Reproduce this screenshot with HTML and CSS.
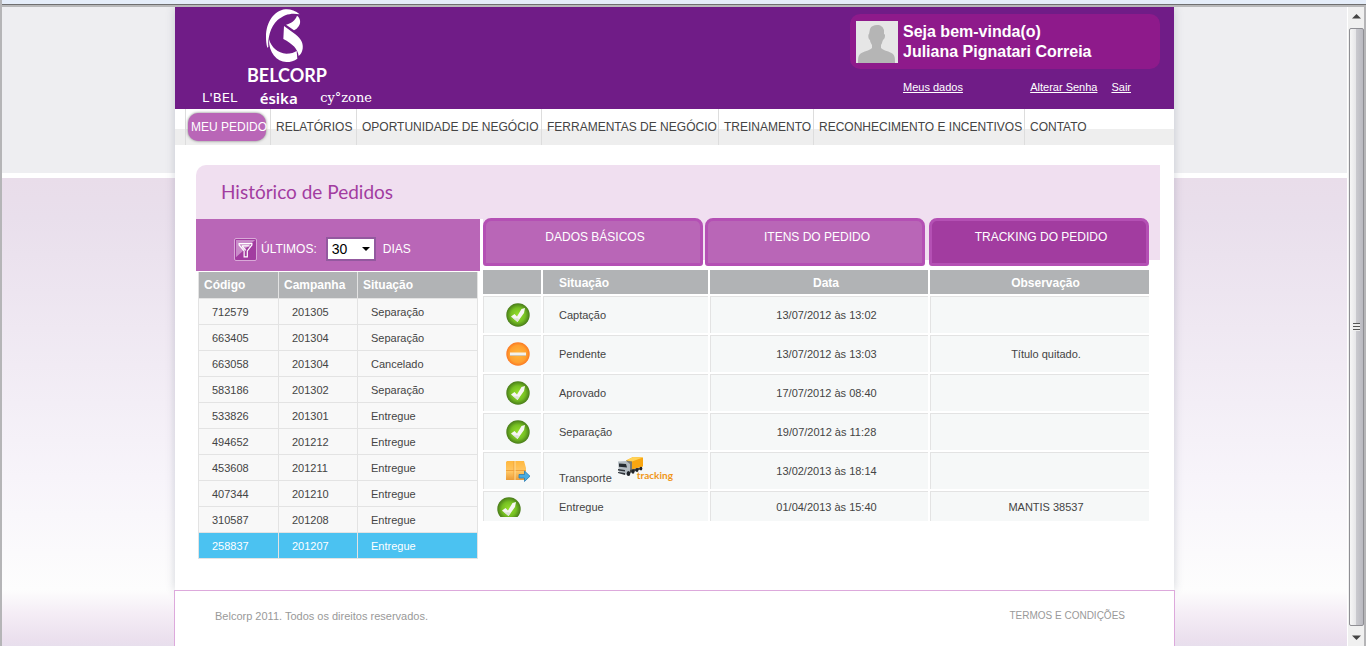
FILE: index.html
```
<!DOCTYPE html>
<html lang="pt-BR">
<head>
<meta charset="utf-8">
<title>Belcorp - Histórico de Pedidos</title>
<link rel="stylesheet" href="styles.css">
</head>
<body>
<svg class="defs" aria-hidden="true">
  <defs>
    <radialGradient id="green" cx="50%" cy="50%" r="55%">
      <stop offset="0" stop-color="#97e02c"/><stop offset=".55" stop-color="#76c022"/><stop offset="1" stop-color="#3d6a17"/>
    </radialGradient>
    <radialGradient id="orange" cx="50%" cy="50%" r="52%">
      <stop offset="0" stop-color="#ffb83c"/><stop offset=".7" stop-color="#ffa030"/><stop offset="1" stop-color="#fb7420"/>
    </radialGradient>
    <linearGradient id="box" x1="0" y1="0" x2="0" y2="1">
      <stop offset="0" stop-color="#ffb83f"/><stop offset=".55" stop-color="#ffc765"/><stop offset="1" stop-color="#eb9c38"/>
    </linearGradient>
    <symbol id="check" viewBox="0 0 24 24">
      <circle cx="12" cy="12" r="11.7" fill="url(#green)"/>
      <path d="M5 13.500l3.500-2.500 2.500 2.500 4.500-7.500 3.500-1-1 5-6.500 9z" fill="#f6f6f2"/>
      <path d="M5 13.500l6.500 5.500 2-3-2.500-1-2 .5z" fill="#dfe3da"/>
    </symbol>
  </defs>
</svg>
<div class="window">
  <div class="site">
    <div class="sheet">
      <header class="header">
        <div class="brand">
          <svg class="brand-mark" viewBox="0 0 114 162" aria-hidden="true">
            <g fill="#fff">
              <path d="M101 16C88 4 72 0 58 1 24 5 0 40 0 84c0 12 1 22 4 32l3-2C5 88 13 54 34 34 55 15 78 11 101 16z"/>
              <path d="M93 20c11 8 12 22 5 32-4 6-8 10-14 12L60 47c14-4 28-12 33-27z"/>
              <path d="M54 51l34 25c18 14 24 28 22 43-2 11-6 17-12 22-3-22-18-36-46-51z"/>
              <path d="M9 91c7 24 26 42 52 43 14 0 24-3 31-8l2 23c-9 7-20 10-33 10C32 158 8 132 9 91z"/>
            </g>
          </svg>
          <strong class="brand-name">BELCORP</strong>
          <div class="brand-lines">
            <span class="lbel">L'BEL</span>
            <span class="esika">ésika</span>
            <span class="cyzone">cy°zone</span>
          </div>
        </div>
        <div class="account">
          <div class="welcome">
            <svg class="avatar" viewBox="0 0 42 42" aria-hidden="true">
              <path fill="#e6e6e6" d="M0 0h42v42H0z"/>
              <path fill="#b5b5b5" d="M14 8c1-3 4-4 7-4 4 0 6 2 7 5v4c1 0 1 1 1 2 0 2-1 3-2 4-1 2-1 4-2 5v3c3 3 8 3 12 6 2 2 2 5 2 9H2c0-4 0-7 2-9 4-3 9-3 12-6v-3c-1-2-2-3-2-5-2-1-2-6-1-6z"/>
            </svg>
            <strong>Seja bem-vinda(o)<br>Juliana Pignatari Correia</strong>
          </div>
          <div class="account-links">
            <a class="my-data" href="#">Meus dados</a>
            <a href="#">Alterar Senha</a>
            <a href="#">Sair</a>
          </div>
        </div>
      </header>
      <nav class="nav">
        <a class="current" href="#"><span>MEU PEDIDO</span></a>
        <a href="#">RELATÓRIOS</a>
        <a href="#">OPORTUNIDADE DE NEGÓCIO</a>
        <a href="#">FERRAMENTAS DE NEGÓCIO</a>
        <a href="#">TREINAMENTO</a>
        <a href="#">RECONHECIMENTO E INCENTIVOS</a>
        <a href="#">CONTATO</a>
      </nav>
      <main class="main">
        <div class="panel">
          <h1>Histórico de Pedidos</h1>
          <div class="columns">
            <section class="orders">
              <form class="filter">
                <button type="button" aria-label="Filtrar">
                  <svg viewBox="0 0 23 23" aria-hidden="true">
                    <path d="M1 1h21L1 20z" fill="#c98bc9"/>
                    <path d="M4.500 5h14v1.500L13.500 13v6.500h-3.500V13L4.500 6.500zM7.500 7.500h8.500M8 8l3.800 4.500" fill="none" stroke="#fff" stroke-width="1.300"/>
                  </svg>
                </button>
                <label for="days">ÚLTIMOS:</label>
                <span class="select"><select id="days"><option>30</option><option>60</option><option>90</option></select></span>
                <span>DIAS</span>
              </form>
              <table class="order-list">
                <thead><tr><th>Código</th><th>Campanha</th><th>Situação</th></tr></thead>
                <tbody>
                  <tr><td>712579</td><td>201305</td><td>Separação</td></tr>
                  <tr><td>663405</td><td>201304</td><td>Separação</td></tr>
                  <tr><td>663058</td><td>201304</td><td>Cancelado</td></tr>
                  <tr><td>583186</td><td>201302</td><td>Separação</td></tr>
                  <tr><td>533826</td><td>201301</td><td>Entregue</td></tr>
                  <tr><td>494652</td><td>201212</td><td>Entregue</td></tr>
                  <tr><td>453608</td><td>201211</td><td>Entregue</td></tr>
                  <tr><td>407344</td><td>201210</td><td>Entregue</td></tr>
                  <tr><td>310587</td><td>201208</td><td>Entregue</td></tr>
                  <tr class="selected"><td>258837</td><td>201207</td><td>Entregue</td></tr>
                </tbody>
              </table>
            </section>
            <section class="details">
              <div class="tabs" role="tablist">
                <button type="button" role="tab">DADOS BÁSICOS</button>
                <button type="button" role="tab">ITENS DO PEDIDO</button>
                <button type="button" role="tab" class="active" aria-selected="true">TRACKING DO PEDIDO</button>
              </div>
              <table class="tracking">
                <colgroup><col class="c-icon"><col class="c-status"><col class="c-date"><col class="c-note"></colgroup>
                <thead><tr><th></th><th>Situação</th><th>Data</th><th>Observação</th></tr></thead>
                <tbody>
                  <tr><td><svg class="icon"><use href="#check"/></svg></td><td>Captação</td><td>13/07/2012 às 13:02</td><td></td></tr>
                  <tr><td><svg class="icon" viewBox="0 0 24 24"><circle cx="12" cy="12" r="11.700" fill="url(#orange)"/><path d="M4 10.500h16v3H4z" fill="#f4f2ec"/><path d="M4 13h16v1H4z" fill="#cfc6b4"/></svg></td><td>Pendente</td><td>13/07/2012 às 13:03</td><td>Título quitado.</td></tr>
                  <tr><td><svg class="icon"><use href="#check"/></svg></td><td>Aprovado</td><td>17/07/2012 às 08:40</td><td></td></tr>
                  <tr><td><svg class="icon"><use href="#check"/></svg></td><td>Separação</td><td>19/07/2012 às 11:28</td><td></td></tr>
                  <tr><td><svg class="icon" viewBox="0 0 24 24">
                      <path d="M0 3l1-1h17l2 7v12H0z" fill="url(#box)"/>
                      <path d="M0 11.500h20M8 2v19" stroke="#f0a23c" stroke-width="1"/>
                      <path d="M9 2v19" stroke="#ffdc98" stroke-width="1"/>
                      <path d="M13 15.500h5.500V12l5.500 5.200-5.500 5.300V19H13z" fill="#4bace0" stroke="#2b7db4" stroke-width=".8"/>
                    </svg></td><td class="shipping">Transporte
                    <a href="#" aria-label="tracking"><svg class="truck" viewBox="0 0 26 20" aria-hidden="true">
                      <path d="M9 3.500L16 0l10 .5v9L13 13V6z" fill="#f9a611"/>
                      <path d="M9 3.500L16 0l10 .5-11 4z" fill="#ffd257"/>
                      <path d="M9 3.500l6 1v9l-3 2z" fill="#7a7a72"/>
                      <path d="M1 4.500L9 4l4 3v9l-3 2-8-2z" fill="#b4bcc2"/>
                      <path d="M2 6.500l7 .5 1 3.500-8-.8z" fill="#262c32"/>
                      <path d="M1 12l7 1v1.500l-7-1zM1 15l7 1v2l-7-2z" fill="#30343a"/>
                      <path d="M13 13l12-3v2l-12 4z" fill="#444"/>
                      <g fill="#20242a"><ellipse cx="11.500" cy="16.500" rx="1.800" ry="2.600"/><ellipse cx="16" cy="14.500" rx="1.500" ry="2.200"/><ellipse cx="20" cy="13" rx="1.400" ry="2"/><ellipse cx="24" cy="11.600" rx="1.300" ry="1.900"/></g>
                    </svg><span>tracking</span></a></td><td>13/02/2013 às 18:14</td><td></td></tr>
                  <tr class="last"><td><svg class="icon" viewBox="0 0 24 20"><use href="#check" width="24" height="24"/></svg></td><td>Entregue</td><td>01/04/2013 às 15:40</td><td>MANTIS 38537</td></tr>
                </tbody>
              </table>
            </section>
          </div>
        </div>
      </main>
    </div>
    <footer class="footer">
      <span>Belcorp 2011. Todos os direitos reservados.</span>
      <a href="#">TERMOS E CONDIÇÕES</a>
    </footer>
  </div>
  <div class="scrollbar" aria-hidden="true">
    <svg viewBox="0 0 9 5"><path d="M4.500 0L9 4.500H0z" fill="#444"/></svg>
    <div class="thumb"><i></i></div>
    <svg viewBox="0 0 9 5"><path d="M0 .5h9L4.500 5z" fill="#444"/></svg>
  </div>
</div>
</body>
</html>
```

FILE: styles.css
```
* { box-sizing: border-box; }

body {
  margin: 0;
  font: 11px/14px "Liberation Sans", Arial, sans-serif;
  color: #444;
}

.defs { position: absolute; width: 0; height: 0; }

button { font: inherit; color: inherit; cursor: pointer; }

.window {
  display: grid;
  grid-template-columns: 1fr 18px;
  height: 100vh;
  padding-top: 7px;
  border-left: 2px solid #b5b5b7;
  background: linear-gradient(#e5edf9 4px, #6f6f70 4px, #6f6f70 5px, #b9b9ba 5px, #b9b9ba 7px, #fff 7px);
}

.site {
  display: flex;
  flex-direction: column;
  align-items: center;
  overflow: hidden;
  border-right: 1px solid #fff;
  background: linear-gradient(#eeeef1 166px, #fff 166px, #fff 171px, #e9ddea 171px, #e9dfec 210px, #f7f4fa 470px, #fdfdfd 583px, #f5eef6 605px, #ebe0ee 632px, #e8dfed 639px);
}

.sheet {
  width: 100%;
  max-width: 999px;
  background: #fff;
  box-shadow: 0 0 9px rgba(60, 70, 90, .22);
}

.header {
  display: flex;
  justify-content: space-between;
  height: 102px;
  padding: 0 14px 0 26px;
  background: #701c87;
  color: #fff;
}

.brand {
  display: flex;
  flex-direction: column;
  align-items: center;
  width: 172px;
  padding-top: 2px;
}

.brand-mark { width: 38px; height: 54px; margin-right: 4px; }
.brand-name { font: bold 18px/24px Lato, sans-serif; }
.brand-lines { display: flex; justify-content: space-between; align-items: center; width: 100%; padding: 0 1px; line-height: 22px; }
.lbel { font-family: "DejaVu Sans", sans-serif; font-size: 13px; }
.esika { font-family: "Noto Sans", sans-serif; font-size: 15px; font-weight: 600; }
.cyzone { font-family: "DejaVu Serif", serif; font-size: 13px; }

.account { width: 310px; padding-top: 7px; }

.welcome {
  display: flex;
  gap: 5px;
  height: 55px;
  padding: 7px 6px;
  border-radius: 10px;
  background: #8e1a8b;
  font-size: 16px;
  line-height: 20px;
}
.welcome strong { padding-top: 1px; }

.avatar { width: 42px; height: 42px; }

.account-links { display: flex; gap: 14px; padding: 11px 29px 0 53px; }
.account-links a { color: #fff; }
.my-data { margin-right: auto; }

.nav {
  display: grid;
  grid-template-columns: 85px 86px 185px 177px 95px 211px 1fr;
  padding-left: 10px;
  background: linear-gradient(#fff 20px, #eee 20px);
  font-size: 12px;
}

.nav a { padding: 1px 0 0 5px; border-left: 1px solid #ddd; color: #444; line-height: 35px; text-decoration: none; white-space: nowrap; }
.nav .current { padding: 4px 4px 4px 2px; }
.nav span {
  display: block;
  padding: 1px 0 0 3px;
  border-radius: 10px;
  background: #b966b7;
  box-shadow: 0 0 3px #777;
  color: #fff;
  line-height: 27px;
}

.main { padding: 20px 14px 31px 21px; }

.panel {
  border-top-left-radius: 10px;
  background: linear-gradient(#f0dff0, #f0dff0) top / 100% 95px no-repeat;
}

h1 {
  height: 54px;
  margin: 0;
  padding-left: 25px;
  color: #a23ca0;
  font: 19px/53px Lato, sans-serif;
}

.columns { display: grid; grid-template-columns: 287px 1fr; }

.orders { border-right: 3px solid #fff; }

.filter {
  display: flex;
  align-items: center;
  height: 52px;
  padding: 8px 38px 0;
  background: #b966b7;
  color: #fff;
  font-size: 12px;
}

.filter button { width: 23px; height: 23px; margin-right: 4px; padding: 0; border: 1px solid #d9a9d8; border-radius: 2px; background: #a23ca0; }
.filter button svg { display: block; width: 21px; height: 21px; }
.filter label { margin-right: 9px; }

.select { position: relative; margin-right: 7px; }
.select::after {
  content: "";
  position: absolute;
  top: 10px;
  right: 6px;
  border: 4px solid transparent;
  border-top-color: #000;
  border-bottom: 0;
  pointer-events: none;
}

select {
  display: block;
  appearance: none;
  width: 50px;
  height: 24px;
  padding: 0 4px;
  border: 2px solid #93599f;
  border-radius: 0;
  background: #fff;
  color: #000;
  font: 14px "Liberation Sans", Arial, sans-serif;
}

table { table-layout: fixed; }
th { color: #fff; background: #b1b3b5; font-size: 12px; }

.order-list { width: 280px; margin: 1px 0 0 2px; border-collapse: collapse; }
.order-list th, .order-list td { height: 26px; padding: 2px 0 0 13px; border: 1px solid #e3e3e3; background: #f8f8f8; text-align: left; }
.order-list th { padding: 0 0 0 5px; border-top: 0; background: #b1b3b5; }
.order-list th:nth-child(1) { width: 80px; }
.order-list th:nth-child(2) { width: 79px; }
.order-list .selected td { background: #4bc2f1; color: #fff; }

.details {
  padding-right: 11px;
  background: linear-gradient(#fff, #fff) bottom / 100% calc(100% - 41px) no-repeat;
}

.tabs { display: grid; grid-template-columns: 220fr 220fr 222fr; gap: 2px; height: 48px; margin-top: -1px; }
.tabs button {
  padding: 0 0 10px 4px;
  border: 3px solid #b450b4;
  border-radius: 8px 8px 3px 3px;
  background: #b966b7;
  color: #fff;
  font-size: 12px;
}
.tabs .active { background: #a23ca0; margin-left: 2px; }

.tracking { width: calc(100% + 4px); margin: 2px -2px 0; border-spacing: 2px; }
.tracking th { height: 24px; padding: 2px 0 0; }
.tracking td { height: 37px; padding: 0; border: solid #e3e3e3; border-width: 1px 0 0 1px; background: #f6f8f8; text-align: center; }
.tracking th:nth-child(2) { padding-left: 16px; text-align: left; }
.tracking td:nth-child(2) { padding-left: 15px; text-align: left; }
.tracking th:nth-child(3), .tracking td:nth-child(3) { padding-left: 14px; }
.tracking th:nth-child(4), .tracking td:nth-child(4) { padding-left: 12px; }
.tracking td:first-child { padding-left: 22px; text-align: left; }
.tracking .last td { height: 30px; }
.tracking .last td:first-child { padding-left: 13px; }
.tracking .last .icon { height: 20px; }
.c-icon { width: 58px; }
.c-status { width: 165px; }
.c-date { width: 218px; }

.icon { display: block; width: 24px; height: 24px; }

.shipping a { color: #f09619; text-decoration: none; }
.shipping span { margin-left: -6px; font: bold 10px/10px Lato, sans-serif; vertical-align: 3px; }
.truck { width: 26px; height: 20px; margin-left: 2px; vertical-align: 5px; }

.footer {
  flex: 1;
  display: flex;
  justify-content: space-between;
  width: 100%;
  max-width: 1001px;
  padding: 18px 49px 0 40px;
  border: solid #dda9dc;
  border-width: 1px 1px 0;
  background: #fff;
  color: #999;
  z-index: 1;
}
.footer a { color: #999; font-size: 10px; text-decoration: none; }

.scrollbar {
  display: flex;
  flex-direction: column;
  align-items: center;
  gap: 9px;
  padding: 7px 0 6px;
  border-right: 2px solid #b5b5b7;
  background: #f0f0f0;
}
.scrollbar svg { width: 9px; height: 5px; }
.thumb {
  flex: 1;
  display: grid;
  place-items: center;
  width: 15px;
  border: 1px solid #8f8f94;
  border-radius: 2px;
  background: linear-gradient(90deg, #f6f6f6, #e6e6e8 45%, #c9c9ce 50%, #b9b9c0);
}
.thumb i { width: 7px; height: 8px; background: repeating-linear-gradient(#555 0, #555 1px, #eee 1px, #eee 3px); }
```
